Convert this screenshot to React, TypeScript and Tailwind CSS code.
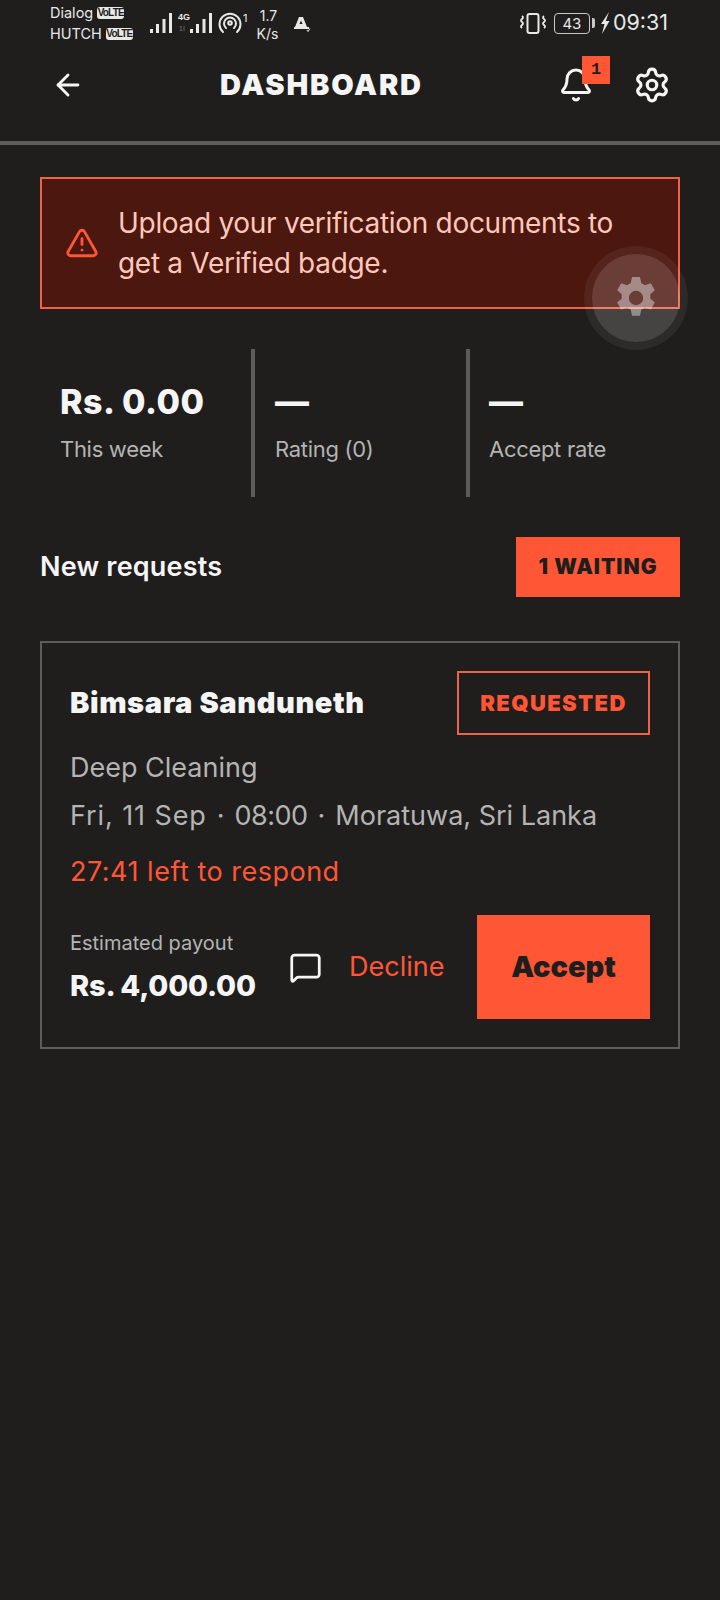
import { ArrowLeft, Bell, MessageSquare, Settings, TriangleAlert } from 'lucide-react';

function VolteTag() {
  return (
    <span className="ml-[4px] inline-flex h-[12px] w-[27px] items-center justify-center rounded-[3px] bg-[#e8e8e8] font-['Liberation_Sans'] text-[10px] font-bold leading-none tracking-[-0.8px] text-[#1f1e1d]">
      VoLTE
    </span>
  );
}

function SignalBars() {
  return (
    <svg width="22" height="22" viewBox="0 0 22 22" fill="#e8e8e8">
      <rect x="0" y="17" width="3" height="4" />
      <rect x="6" y="12" width="3" height="9" />
      <rect x="12.5" y="7" width="3" height="14" />
      <rect x="19" y="1" width="3" height="20" />
    </svg>
  );
}

function StatusBar() {
  return (
    <div className="flex h-[48px] items-start justify-between pl-[50px] pr-[52px] pt-[2px] font-['Inter',sans-serif] text-[#e8e8e8]">
      <div className="flex items-start">
        <div className="w-[100px] text-[14.5px] leading-[21px]">
          <div className="flex items-center">Dialog<VolteTag /></div>
          <div className="flex items-center">HUTCH<VolteTag /></div>
        </div>
        <div className="ml-[0px] mt-[10px] flex items-start">
          <SignalBars />
          <div className="relative ml-[6px] h-[22px] w-[12px]">
            <span className="absolute left-0 top-0 font-['Liberation_Sans'] text-[9px] font-bold leading-[11px]">4G</span>
            <span className="absolute left-[1px] top-[13px] font-['Liberation_Sans'] text-[7px] leading-[8px] text-[#777]">1I</span>
          </div>
          <SignalBars />
          <svg className="ml-[6px]" width="24" height="22" viewBox="0 0 24 22" fill="none" stroke="#e8e8e8" strokeWidth="2" strokeLinecap="round">
            <path d="M5 20a10.5 10.5 0 1 1 14 0" />
            <path d="M8 16a6 6 0 1 1 8 0" />
            <circle cx="12" cy="11" r="1.8" />
          </svg>
          <span className="ml-[1px] text-[11px] leading-[12px]">1</span>
        </div>
        <div className="ml-[9px] mt-[5px] w-[24px] text-center text-[14px] leading-[18px]">
          <div>1.7</div>
          <div className="ml-[-2px]">K/s</div>
        </div>
        <svg className="ml-[13px] mt-[14px]" width="18" height="16" viewBox="0 0 18 16" fill="#e8e8e8">
          <path d="M6 1h4l4 10h2v2H1V11h1zM8 4.5 6.5 8h3z" fillRule="evenodd" />
          <path d="M14 14l1 1.5 2-3" fill="none" stroke="#e8e8e8" strokeWidth="1" />
        </svg>
      </div>
      <div className="mt-[10px] flex items-center">
        <svg width="26" height="22" viewBox="0 0 26 22" fill="none" stroke="#e8e8e8" strokeWidth="2">
          <rect x="7.5" y="2" width="11" height="19" rx="2" />
          <path d="M2 4q2 1.5 0 3t0 3 0 3 0 3M24 4q-2 1.5 0 3t0 3 0 3 0 3" strokeWidth="1.8" />
        </svg>
        <div className="relative ml-[8px] flex h-[21px] w-[36px] items-center justify-center rounded-[4px] border-[1.5px] border-[#c8c8c8] text-[15px] leading-none">
          43
        </div>
        <div className="ml-[2px] h-[10px] w-[3px] rounded-r-[2px] bg-[#c8c8c8]" />
        <svg className="ml-[5px]" width="10" height="22" viewBox="0 0 10 22" fill="#e8e8e8">
          <path d="M9 0 1 12h3.5L2 22l7.5-13H5.8z" />
        </svg>
        <span className="ml-[3px] text-[21.5px] leading-none">09:31</span>
      </div>
    </div>
  );
}

function Header() {
  return (
    <div className="flex h-[97px] items-center border-b-4 border-[#5c5c5b] pb-[20px] pl-[51px] pr-[49px]">
      <ArrowLeft size={34} strokeWidth={2} className="text-[#f5f5f5]" />
      <h1 className="ml-[135px] text-[29px] font-black tracking-[1.8px] text-[#f5f5f5]">
        DASHBOARD
      </h1>
      <div className="relative ml-auto">
        <Bell size={36} strokeWidth={2} className="text-[#f5f5f5]" />
        <span className="absolute left-[24px] top-[-11px] flex h-[28px] w-[28px] items-center justify-center bg-[#ff5636] font-['Liberation_Mono'] text-[17px] font-bold text-[#1f1e1d]">
          1
        </span>
      </div>
      <Settings size={38} strokeWidth={2} className="ml-[39px] text-[#f5f5f5]" />
    </div>
  );
}

function Banner() {
  return (
    <div className="relative mx-[40px] mt-[32px] flex h-[132px] items-center border-2 border-[#ef6248] bg-[#4c170e] pl-[23px]">
      <TriangleAlert size={34} strokeWidth={2} className="mr-[19px] shrink-0 text-[#ff5636]" />
      <p className="text-[28px] leading-[40px] tracking-[-0.3px] text-[#ffc7b9]">
        Upload your verification documents to
        <br />
        get a Verified badge.
      </p>
    </div>
  );
}

// floating assistive button, sits over the banner
function FloatingGear() {
  return (
    <div className="absolute left-[584px] top-[246px] flex h-[104px] w-[104px] items-center justify-center rounded-full bg-white/[0.06]">
      <div className="flex h-[88px] w-[88px] items-center justify-center rounded-full bg-white/[0.12]">
        <svg width="48" height="48" viewBox="0 0 24 24" fill="#ffffff" fillOpacity="0.4">
          <path
            fillRule="evenodd"
            d="M10 1.5h4l.6 3 1.9 1.1 2.9-1 2 3.5-2.3 2a7 7 0 0 1 0 2.2l2.3 2-2 3.5-2.9-1-1.9 1.1-.6 3h-4l-.6-3-1.9-1.1-2.9 1-2-3.5 2.3-2a7 7 0 0 1 0-2.2l-2.3-2 2-3.5 2.9 1 1.9-1.1zM12 8.4a3.6 3.6 0 1 0 0 7.2 3.6 3.6 0 0 0 0-7.2z"
          />
        </svg>
      </div>
    </div>
  );
}

const stats = [
  { value: 'Rs. 0.00', label: 'This week' },
  { value: '—', label: 'Rating (0)' },
  { value: '—', label: 'Accept rate' },
];

function Stats() {
  return (
    <div className="mx-[40px] mt-[40px] grid h-[148px] grid-cols-[215px_215px_1fr]">
      {stats.map((stat, i) => (
        <div
          key={stat.label}
          className={[
            'pt-[32px]',
            i === 0 ? 'border-r-4 border-[#5c5c5b] pl-[20px]' : '',
            i === 1 ? 'border-r-4 border-[#5c5c5b] pl-[20px]' : '',
            i === 2 ? 'pl-[19px]' : '',
          ].join(' ')}
        >
          <div className="h-[42px] text-[34px] font-extrabold leading-[42px] tracking-[0.5px] text-[#f5f5f5]">
            {stat.value}
          </div>
          <div className="mt-[12px] text-[22px] leading-[28px] tracking-[-0.3px] text-[#b4b4b2]">{stat.label}</div>
        </div>
      ))}
    </div>
  );
}

function RequestCard() {
  return (
    <div className="mx-[40px] mt-[44px] h-[408px] border-2 border-[#5c5c5b] px-[28px] pt-[28px]">
      <div className="flex items-center justify-between">
        <span className="text-[29px] font-black tracking-[0.6px] text-[#f5f5f5]">Bimsara Sanduneth</span>
        <span className="flex h-[64px] w-[193px] items-center justify-center border-2 border-[#ef6248] text-[22px] font-black tracking-[1.4px] text-[#ff5636]">
          REQUESTED
        </span>
      </div>
      <div className="mt-[15px] text-[27px] leading-[36px] text-[#b4b4b2]">Deep Cleaning</div>
      <div className="mt-[12px] flex text-[27px] leading-[36px] text-[#b4b4b2]">
        <span className="tracking-[0.9px]">Fri, 11 Sep</span>
        <span className="mx-[10px]">·</span>
        <span className="tracking-[-0.5px]">08:00</span>
        <span className="mx-[10px]">·</span>
        <span>Moratuwa, Sri Lanka</span>
      </div>
      <div className="mt-[20px] text-[27px] leading-[36px] tracking-[0.5px] text-[#ff5636]">27:41 left to respond</div>
      <div className="mt-[25px] flex items-center">
        <div className="w-[219px]">
          <div className="text-[20px] leading-[24px] text-[#b4b4b2]">Estimated payout</div>
          <div className="mt-[13px] text-[29px] font-extrabold leading-[36px] tracking-[-0.2px] text-[#f5f5f5]">
            Rs. 4,000.00
          </div>
        </div>
        <MessageSquare size={33} strokeWidth={2} className="text-[#f5f5f5]" />
        <span className="ml-[27px] text-[27px] text-[#ff5636]">Decline</span>
        <button className="ml-auto h-[104px] w-[173px] bg-[#ff5636] text-[29px] font-black text-[#1f1e1d]">
          Accept
        </button>
      </div>
    </div>
  );
}

export default function App() {
  return (
    <div className="relative h-[1600px] w-[720px] overflow-hidden bg-[#1f1e1d] font-['Inter',sans-serif]">
      <StatusBar />
      <Header />
      <Banner />
      <Stats />
      <div className="mx-[40px] mt-[40px] flex h-[60px] items-center justify-between">
        <h2 className="text-[27px] font-semibold tracking-[0.2px] text-[#f5f5f5]">New requests</h2>
        <span className="flex h-[60px] w-[164px] items-center justify-center bg-[#ff5636] text-[21px] font-black tracking-[1px] text-[#1f1e1d]">
          1 WAITING
        </span>
      </div>
      <RequestCard />
      <FloatingGear />
    </div>
  );
}
